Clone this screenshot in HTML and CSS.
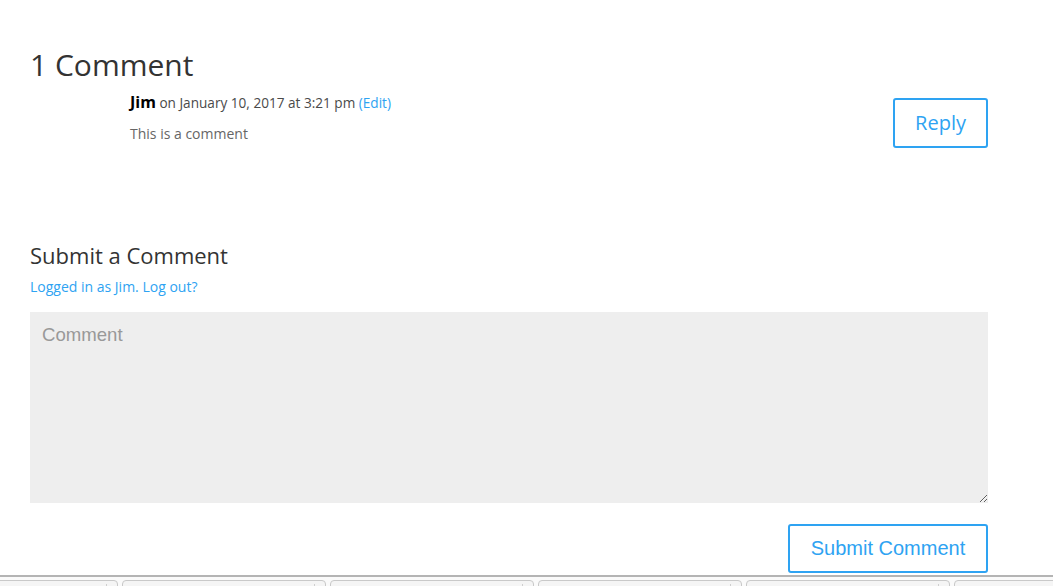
FILE: index.html
```html
<!DOCTYPE html>
<html lang="en">
<head>
  <meta charset="UTF-8">
  <meta name="viewport" content="width=device-width, initial-scale=1.0">
  <title>Comments</title>
  <link rel="stylesheet" href="styles.css">
</head>
<body>
  <main class="page">
    <section class="comments">
      <h1 class="comments-title">1 Comment</h1>
      <div class="comment">
        <div class="comment-body">
          <p class="comment-meta"><strong class="author">Jim</strong> on January 10, 2017 at 3:21 pm <a href="#">(Edit)</a></p>
          <p class="comment-text">This is a comment</p>
        </div>
        <a href="#" class="btn btn-reply">Reply</a>
      </div>
    </section>
    <section class="respond">
      <h3 class="respond-title">Submit a Comment</h3>
      <p class="logged-in"><a href="#">Logged in as Jim</a>. <a href="#">Log out?</a></p>
      <form class="comment-form">
        <textarea class="comment-field" placeholder="Comment"></textarea>
        <div class="form-submit"><button type="submit" class="btn btn-submit">Submit Comment</button></div>
      </form>
    </section>
  </main>
  <div class="bottom-bar">
    <div class="tab tab-first"></div>
    <div class="tab"></div>
    <div class="tab"></div>
    <div class="tab"></div>
    <div class="tab"></div>
    <div class="tab"></div>
  </div>
</body>
</html>
```

FILE: styles.css
```css
body { margin: 0; background: #fff; font-family: "Open Sans", Arial, sans-serif; font-size: 14px; color: #666; overflow: hidden; }
a { color: #2ea3f2; text-decoration: none; }
p { margin: 0; }

.page { width: 958px; padding: 45px 0 0 30px; }

.comments-title { margin: 0; font-size: 30px; line-height: 40px; font-weight: 400; color: #333; }

.comment { display: flex; justify-content: space-between; align-items: flex-start; margin-top: 7px; }
.comment-body { padding-left: 100px; }
.comment-meta { font-size: 13.6px; line-height: 20px; color: #4a4a4a; }
.author { color: #000; font-weight: 700; font-size: 16px; }
.comment-text { margin-top: 11px; line-height: 20px; color: #666; }

.btn { display: inline-block; background: #fff; color: #2ea3f2; border: 2px solid #2ea3f2; border-radius: 3px; font-size: 20px; cursor: pointer; }
.btn-reply { margin-top: 6px; padding: 6px 20px; line-height: 34px; font-family: "Open Sans", Arial, sans-serif; }

.respond { margin-top: 92px; }
.respond-title { margin: 0; font-size: 22px; line-height: 30px; font-weight: 400; color: #333; }
.logged-in { margin-top: 7px; line-height: 20px; color: #2ea3f2; }

.comment-form { margin-top: 15px; }
.comment-field { display: block; box-sizing: border-box; width: 100%; height: 191px; margin: 0; padding: 12px; border: none; border-radius: 0; background: #eee; font-family: "Liberation Sans", Arial, sans-serif; font-size: 18.6px; color: #555; }
.comment-field::placeholder { color: #999; }

.form-submit { display: flex; justify-content: flex-end; margin-top: 21px; }
.btn-submit { box-sizing: border-box; width: 200px; height: 49px; padding: 0 20px; font-family: "Liberation Sans", Arial, sans-serif; }

.bottom-bar { display: flex; gap: 4px; margin-top: 2px; padding-top: 3px; height: 20px; overflow: hidden; border-top: 2px solid #b4b4b4; background: #fafafa; }
.tab { position: relative; flex: 0 0 204px; box-sizing: border-box; height: 20px; border: 1px solid #c9c9c9; border-radius: 4px 4px 0 0; background: #f5f5f5; }
.tab::after { content: ""; position: absolute; top: 3px; right: 10px; width: 1px; height: 14px; background: #cfcfcf; }
.tab-first { margin-left: -86px; }
```
